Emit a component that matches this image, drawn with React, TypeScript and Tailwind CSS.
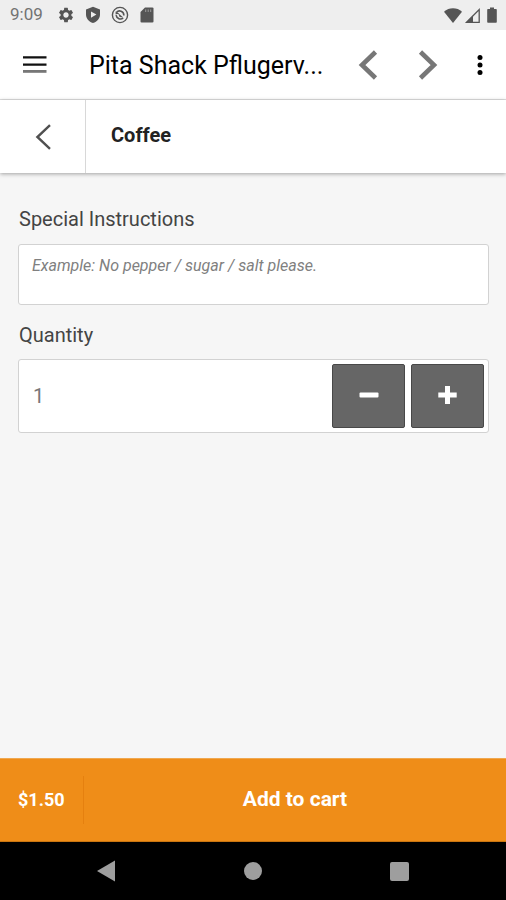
import { useState } from "react";
import { MdSettings } from "react-icons/md";

function ShieldIcon() {
  return (
    <svg viewBox="0 0 16 18" className="h-[18px] w-4" aria-hidden="true">
      <path
        fillRule="evenodd"
        fill="currentColor"
        d="M8 .8 15 3.6V8.5C15 12.6 12.2 15.6 8 17 3.8 15.6 1 12.6 1 8.5V3.6ZM6 5.4V11.8L11.4 8.6Z"
      />
    </svg>
  );
}

function SyncCircleIcon() {
  return (
    <svg viewBox="0 0 18 18" className="size-[18px]" fill="none" stroke="currentColor" aria-hidden="true">
      <circle cx="9" cy="9" r="7.6" strokeWidth="1.4" />
      <path d="M5.6 6.2C8 3.6 12.8 5.2 12.9 9.4" strokeWidth="1.6" />
      <path d="M12.2 12C9.8 14 5.6 12.8 5.1 9.2" strokeWidth="1.6" />
      <path d="M4.6 5.4V8.6L8.4 7.4ZM7 7 12.4 11.6 8.6 11Z" fill="currentColor" stroke="none" />
    </svg>
  );
}

function SdCardIcon() {
  return (
    <svg viewBox="-1 0 16 16" className="size-4" aria-hidden="true">
      <path d="M5 .5H12.4Q13.5 .5 13.5 1.6V14.4Q13.5 15.5 12.4 15.5H1.6Q.5 15.5 .5 14.4V5Z" fill="currentColor" />
      <path d="M5.7 2.4V5M8.2 2.4V5M10.7 2.4V5" stroke="#9a9a9a" strokeWidth="1" />
    </svg>
  );
}

function WifiIcon() {
  return (
    <svg viewBox="0 0 18 15" className="h-[15px] w-[18px]" aria-hidden="true">
      <path d="M0 3.8C5 -.8 13 -.8 18 3.8L9 15Z" fill="currentColor" />
    </svg>
  );
}

function SignalIcon() {
  return (
    <svg viewBox="0 0 15 15" className="size-[15px]" aria-hidden="true">
      <path d="M1.6 14.3 14.2 1.6V14.3Z" fill="none" stroke="currentColor" strokeWidth="1.3" />
      <path d="M.5 15 8 7.5V15Z" fill="currentColor" />
    </svg>
  );
}

function BatteryIcon() {
  return (
    <svg viewBox="0 0 10 16" className="ml-1 h-4 w-[10px]" aria-hidden="true">
      <path d="M3 .5H7V2H9Q9.8 2 9.8 2.8V15Q9.8 15.8 9 15.8H1Q.2 15.8 .2 15V2.8Q.2 2 1 2H3Z" fill="currentColor" />
    </svg>
  );
}

function StatusBar() {
  return (
    <div className="flex h-[30px] items-center bg-[#eeeeee] pr-[9px] pl-2.5 text-[#555555]">
      <span className="w-[47px] text-[17px] text-[#737373]">9:09</span>
      <div className="flex items-center gap-[10px]">
        <MdSettings className="size-[18px]" />
        <ShieldIcon />
        <SyncCircleIcon />
        <SdCardIcon />
      </div>
      <div className="ml-auto flex items-center gap-[3px]">
        <WifiIcon />
        <SignalIcon />
        <BatteryIcon />
      </div>
    </div>
  );
}

function AppHeader() {
  return (
    <header className="flex h-[70px] items-center border-b border-[#e0e0e0] bg-white pr-4 pl-[23px]">
      <button type="button" aria-label="Menu" className="mr-[42px] shrink-0">
        <svg viewBox="0 0 24 18" className="h-[18px] w-6">
          <path d="M0 1.4H23.5M0 8.6H23.5" stroke="#111111" strokeWidth="2.4" />
          <path d="M0 15.4H23.5" stroke="#777777" strokeWidth="2.8" />
        </svg>
      </button>
      <h1 className="min-w-0 flex-1 truncate pt-0.5 text-[25px] text-black">Pita Shack Pflugerv...</h1>
      <div className="flex shrink-0 items-center">
        <button type="button" aria-label="Previous">
          <svg viewBox="0 0 20 30" className="h-[30px] w-5" fill="none" stroke="#777777" strokeWidth="4.6">
            <path d="M17.5 2 4 15 17.5 28" />
          </svg>
        </button>
        <button type="button" aria-label="Next" className="ml-10">
          <svg viewBox="0 0 20 30" className="h-[30px] w-5" fill="none" stroke="#777777" strokeWidth="4.6">
            <path d="M2.5 2 16 15 2.5 28" />
          </svg>
        </button>
        <button type="button" aria-label="More options" className="ml-8">
          <svg viewBox="0 0 20 22" className="h-[22px] w-5" fill="#000000">
            <circle cx="10" cy="3.5" r="2.5" />
            <circle cx="10" cy="11" r="2.5" />
            <circle cx="10" cy="18.5" r="2.5" />
          </svg>
        </button>
      </div>
    </header>
  );
}

function ItemBar({ name }: { name: string }) {
  return (
    <div className="flex h-[73px] items-stretch bg-white shadow-[0_1px_4px_rgba(0,0,0,0.35)]">
      <button
        type="button"
        aria-label="Back"
        className="flex w-[86px] shrink-0 items-center justify-center border-r border-[#d8d8d8]"
      >
        <svg viewBox="0 0 16 26" className="h-[26px] w-4" fill="none" stroke="#505050" strokeWidth="2.4">
          <path d="M15 1.2 2.4 13 15 24.8" />
        </svg>
      </button>
      <h2 className="self-center pb-1 pl-[25px] text-xl font-bold text-[#222222]">{name}</h2>
    </div>
  );
}

function QuantityField() {
  const [quantity, setQuantity] = useState(1);
  const stepClass =
    "flex w-[73px] shrink-0 items-center justify-center rounded-xs border border-[#484848] bg-[#666666]";

  return (
    <div className="flex h-[74px] gap-1.5 rounded-[3px] border border-[#d2d2d2] bg-white p-1">
      <input
        id="quantity"
        type="text"
        inputMode="numeric"
        value={quantity}
        onChange={(e) => setQuantity(Number(e.target.value) || 1)}
        className="min-w-0 flex-1 pl-[10px] text-xl text-[#777777] outline-none"
      />
      <button
        type="button"
        aria-label="Decrease"
        className={stepClass}
        onClick={() => setQuantity(Math.max(1, quantity - 1))}
      >
        <svg viewBox="0 0 20 20" className="size-5">
          <rect x="0.5" y="6.5" width="19" height="5" rx="1" fill="#ffffff" />
        </svg>
      </button>
      <button type="button" aria-label="Increase" className={stepClass} onClick={() => setQuantity(quantity + 1)}>
        <svg viewBox="0 0 20 20" className="size-5">
          <path d="M7 0H12V6.5H18.7V11.5H12V18H7V11.5H.3V6.5H7Z" fill="#ffffff" />
        </svg>
      </button>
    </div>
  );
}

function CartBar({ price }: { price: string }) {
  return (
    <button
      type="button"
      className="flex h-[84px] w-full items-center border-t border-b border-t-[#f0a850] border-b-[#c97510] bg-[#ef8d18] font-bold text-white"
    >
      <span className="flex h-12 w-[84px] items-center border-r border-[#e5800f] pl-[18px] text-lg">{price}</span>
      <span className="flex-1 text-center text-[21px]">Add to cart</span>
    </button>
  );
}

function SystemNav() {
  return (
    <nav className="flex h-[58px] items-center justify-between bg-black px-[97px] text-[#9e9e9e]">
      <button type="button" aria-label="System back">
        <svg viewBox="0 0 18 22" className="h-[22px] w-[18px]" fill="currentColor">
          <path d="M0 11 18 .5V21.5Z" />
        </svg>
      </button>
      <button type="button" aria-label="Home" className="size-[18px] rounded-full bg-[#9e9e9e]" />
      <button type="button" aria-label="Recent apps" className="size-[19px] rounded-xs bg-[#9e9e9e]" />
    </nav>
  );
}

export default function App() {
  return (
    <div className="flex min-h-screen flex-col bg-[#f6f6f6] font-['Roboto',sans-serif]">
      <StatusBar />
      <AppHeader />
      <ItemBar name="Coffee" />
      <main className="flex flex-1 flex-col pt-8 pr-[17px] pl-[18px]">
        <label htmlFor="instructions" className="pl-px text-xl text-[#444444]">
          Special Instructions
        </label>
        <textarea
          id="instructions"
          placeholder="Example: No pepper / sugar / salt please."
          className="mt-[11px] h-[61px] w-full resize-none rounded-[3px] border border-[#d2d2d2] bg-white px-[13px] py-[9px] text-base text-[#555555] outline-none placeholder:text-[#808080] placeholder:italic"
        />
        <label htmlFor="quantity" className="mt-4 mb-[10px] pl-px text-xl text-[#444444]">
          Quantity
        </label>
        <QuantityField />
      </main>
      <CartBar price="$1.50" />
      <SystemNav />
    </div>
  );
}
